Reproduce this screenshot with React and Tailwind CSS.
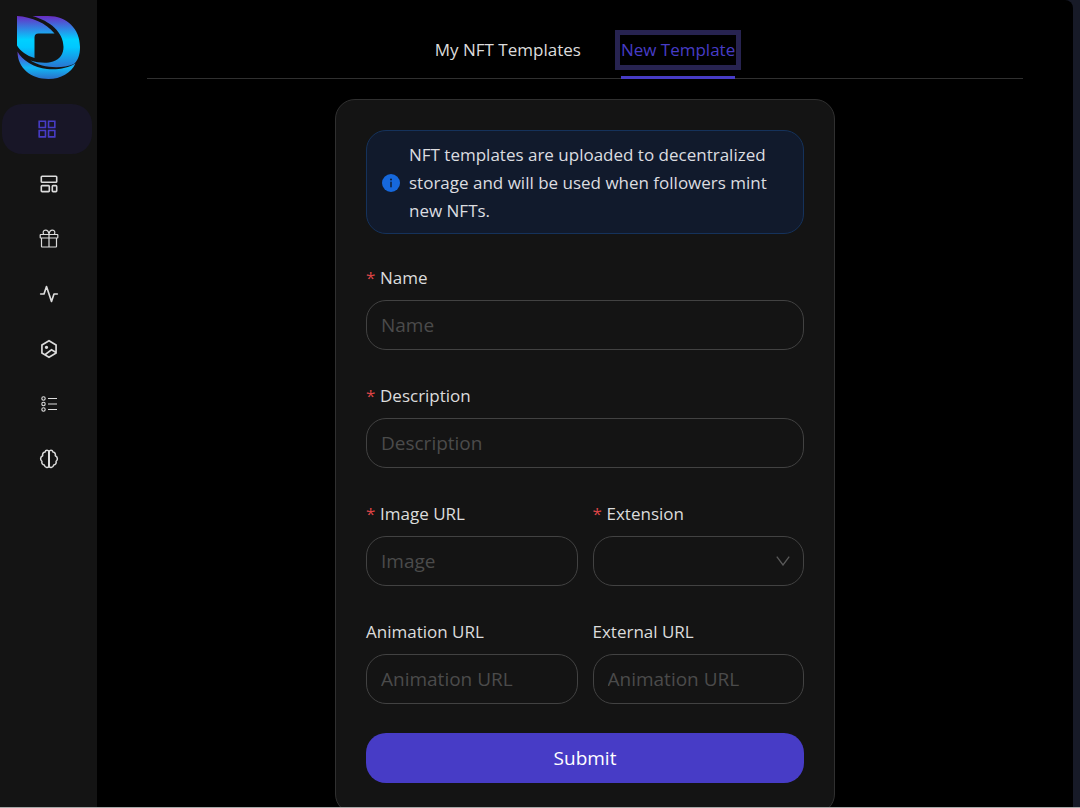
import { AiOutlineAppstore } from "react-icons/ai";
import { FiActivity } from "react-icons/fi";
import { RiNftLine } from "react-icons/ri";

function Logo() {
  return (
    <svg viewBox="0 0 63 63" className="size-[63px]" aria-hidden="true">
      <defs>
        <linearGradient id="upper" x1="0" y1="0" x2="0" y2="52" gradientUnits="userSpaceOnUse">
          <stop offset="0" stopColor="#6a2cc4" />
          <stop offset="0.45" stopColor="#00d0ff" />
          <stop offset="0.6" stopColor="#00c8ff" />
          <stop offset="1" stopColor="#2b72d0" />
        </linearGradient>
        <linearGradient id="lower" x1="0" y1="35" x2="0" y2="63" gradientUnits="userSpaceOnUse">
          <stop offset="0" stopColor="#6a2cc4" />
          <stop offset="0.6" stopColor="#10b8f5" />
          <stop offset="1" stopColor="#2b6fc9" />
        </linearGradient>
      </defs>
      <path
        fill="url(#upper)"
        d="M0 0C15 1 29 7 37.500 17.500H21.500Q17.500 17.500 17.500 21.500V42C10 40 3 35 0 29.500Z"
      />
      <path
        fill="url(#upper)"
        d="M15.500 0H31C50 0 63 13 63 31C63 39 61 44 57 48C42 54 24 51 13.500 44.500C22 47 30 47.500 36 45.500C43 43 46.500 38 46.500 31C46.500 16 33 5 15.500 0Z"
      />
      <path
        fill="url(#lower)"
        d="M0.500 35.500C5 44 17 52 30 53C41 54 51 52 58.500 47.500C54 57 44 63 31.500 63C14 63 0.500 52 0.500 35.500Z"
      />
    </svg>
  );
}

function TemplateIcon() {
  return (
    <svg viewBox="0 0 20 20" className="size-5" fill="none" stroke="currentColor" strokeWidth="1.6" aria-hidden="true">
      <rect x="2.300" y="2.300" width="15.400" height="6" rx="0.800" />
      <rect x="2.300" y="11.600" width="8" height="6" rx="0.800" />
      <rect x="13.300" y="11.600" width="4.400" height="6" rx="0.800" />
    </svg>
  );
}

function GiftIcon() {
  return (
    <svg
      viewBox="0 0 20 20"
      className="size-5"
      fill="none"
      stroke="currentColor"
      strokeWidth="1.2"
      strokeLinejoin="round"
      aria-hidden="true"
    >
      <rect x="1.200" y="5.500" width="17.600" height="3.500" rx="0.500" />
      <path d="M2.500 9V17.500Q2.500 18 3 18H17Q17.500 18 17.500 17.500V9M10 5.500V18" />
      <path d="M10 5.500C9.800 2.700 8.400 1.100 6.500 1.100C4.200 1.100 3.400 3.600 4.900 5.500M10 5.500C10.200 2.700 11.600 1.100 13.500 1.100C15.800 1.100 16.600 3.600 15.100 5.500" />
    </svg>
  );
}

function ListIcon() {
  return (
    <svg viewBox="0 0 20 20" className="size-5" fill="none" stroke="currentColor" strokeWidth="1.1" aria-hidden="true">
      <circle cx="4.500" cy="4.500" r="1.700" />
      <circle cx="4.500" cy="10" r="1.700" />
      <circle cx="4.500" cy="15.500" r="1.700" />
      <path d="M9 4.500H18M9 10H18M9 15.500H18" />
    </svg>
  );
}

function BrainIcon() {
  return (
    <svg
      viewBox="0 0 20 20"
      className="size-5"
      fill="none"
      stroke="currentColor"
      strokeWidth="1.5"
      strokeLinecap="round"
      strokeLinejoin="round"
      aria-hidden="true"
    >
      <path d="M10 3.200C9.600 .7 6.600 .7 6 3.100C4.200 3.200 3.200 4.900 3.700 6.700C1.300 7.600 .9 10.900 2.900 12.300C2.400 14.400 3.700 15.900 5.300 16.100C6 18.900 9.500 19.300 10 16.800C10.500 19.300 14 18.900 14.700 16.100C16.300 15.900 17.600 14.400 17.100 12.300C19.100 10.900 18.700 7.600 16.300 6.700C16.800 4.900 15.800 3.200 14 3.100C13.400 .7 10.400 .7 10 3.200Z" />
      <path d="M10 3V17" strokeWidth="2" />
    </svg>
  );
}

const navItems = [
  { label: "Dashboard", icon: <AiOutlineAppstore className="size-6" />, active: true },
  { label: "Templates", icon: <TemplateIcon /> },
  { label: "Rewards", icon: <GiftIcon /> },
  { label: "Activity", icon: <FiActivity className="size-5" /> },
  { label: "NFTs", icon: <RiNftLine className="size-5" /> },
  { label: "List", icon: <ListIcon /> },
  { label: "Insights", icon: <BrainIcon /> },
];

function Sidebar() {
  return (
    <aside className="flex w-[97px] shrink-0 flex-col bg-[#141414]">
      <a href="#home" aria-label="Home" className="mt-4 ml-[17px] w-fit">
        <Logo />
      </a>
      <nav className="mt-[25px] flex flex-col gap-[5px]">
        {navItems.map((item) => (
          <a
            key={item.label}
            href={"#" + item.label.toLowerCase()}
            aria-label={item.label}
            className={
              item.active
                ? "ml-0.5 flex h-[50px] w-[90px] items-center justify-center rounded-[20px] bg-[#181627] text-[#473cc6]"
                : "ml-0.5 flex h-[50px] w-[94px] items-center justify-center rounded-[20px] text-[#dcdcdc]"
            }
          >
            {item.icon}
          </a>
        ))}
      </nav>
    </aside>
  );
}

function Tabs() {
  return (
    <div role="tablist" className="flex justify-center gap-10 border-b border-[#303030] pt-9 text-[17px] leading-7">
      <button type="button" role="tab" aria-selected="false" className="h-[42px] pb-3.5 text-[#dcdcdc]">
        My NFT Templates
      </button>
      <button
        type="button"
        role="tab"
        aria-selected="true"
        className="-mb-px flex h-[43px] flex-col justify-between border-b-[3px] border-[#473cc6] text-[#473cc6]"
      >
        <span className="block h-7 outline-[5px] outline-offset-1 outline-[#272350]">New Template</span>
      </button>
    </div>
  );
}

const controlClass =
  "h-[50px] w-full min-w-0 rounded-[20px] border border-[#424242] bg-[#141414] px-3.5 text-[19px] text-[#dcdcdc] placeholder:text-[#4b4b4b] placeholder:opacity-100";

function Field({ id, label, required, children }) {
  return (
    <div className="flex min-w-0 flex-col gap-2">
      <label htmlFor={id} className="flex text-[17px] leading-7 text-[#dcdcdc]">
        {required && (
          <span aria-hidden="true" className="w-3.5 text-[#dc4446]">
            *
          </span>
        )}
        {label}
      </label>
      {children}
    </div>
  );
}

function TextField({ id, label, placeholder, required }) {
  return (
    <Field id={id} label={label} required={required}>
      <input id={id} type="text" placeholder={placeholder} required={required} className={controlClass} />
    </Field>
  );
}

function InfoIcon() {
  return (
    <svg viewBox="0 0 18 18" className="size-[18px] shrink-0" aria-hidden="true">
      <circle cx="9" cy="9" r="9" fill="#1668dc" />
      <rect x="8.300" y="7.700" width="1.400" height="5.600" fill="#111a2c" />
      <circle cx="9" cy="5.500" r="1" fill="#111a2c" />
    </svg>
  );
}

function TemplateForm() {
  return (
    <form className="mx-auto mt-5 w-full max-w-[500px] rounded-[20px] border border-[#303030] bg-[#141414] p-[30px]">
      <div role="note" className="flex items-center gap-[9px] rounded-[20px] border border-[#15325b] bg-[#111a2c] px-[15px] pt-2.5 pb-2">
        <InfoIcon />
        <p className="text-[17px] leading-7 text-[#dcdde0]">
          NFT templates are uploaded to decentralized storage and will be used when followers mint new NFTs.
        </p>
      </div>
      <div className="mt-[30px] flex flex-col gap-8">
        <TextField id="name" label="Name" placeholder="Name" required />
        <TextField id="description" label="Description" placeholder="Description" required />
        <div className="grid grid-cols-2 gap-x-[15px] gap-y-8">
          <TextField id="image-url" label="Image URL" placeholder="Image" required />
          <Field id="extension" label="Extension" required>
            <div className="relative">
              <select id="extension" required defaultValue="" className={controlClass + " appearance-none"}>
                <option value=""></option>
              </select>
              <svg
                viewBox="0 0 14 10"
                className="pointer-events-none absolute top-5 right-3.5 h-2.5 w-3.5"
                fill="none"
                stroke="#5a5a5a"
                strokeWidth="1.300"
                aria-hidden="true"
              >
                <path d="M.8.6L7 9L13.200.6" />
              </svg>
            </div>
          </Field>
          <TextField id="animation-url" label="Animation URL" placeholder="Animation URL" />
          <TextField id="external-url" label="External URL" placeholder="Animation URL" />
        </div>
      </div>
      <button type="submit" className="mt-[29px] h-[50px] w-full rounded-[20px] bg-[#473cc6] text-[19px] text-white">
        Submit
      </button>
    </form>
  );
}

export default function App() {
  return (
    <div className="flex h-screen border-b border-[#a8a8a8] bg-[#171a27] pr-[7px] font-['Open_Sans','Noto_Sans',sans-serif]">
      <Sidebar />
      <main className="min-w-0 flex-1 overflow-y-auto rounded-tr-lg bg-black px-[50px] [scrollbar-width:none]">
        <Tabs />
        <TemplateForm />
      </main>
    </div>
  );
}
